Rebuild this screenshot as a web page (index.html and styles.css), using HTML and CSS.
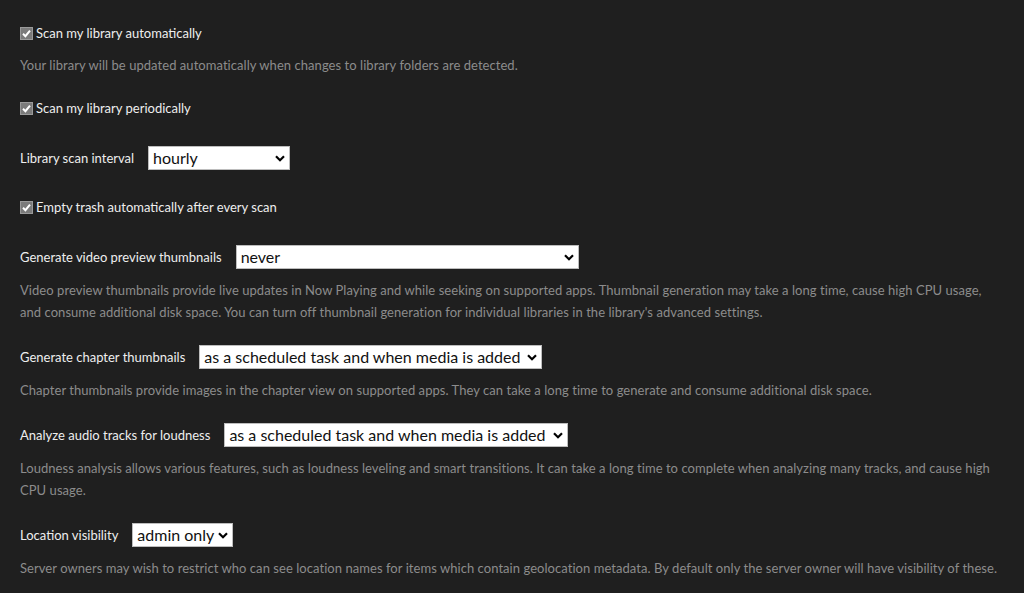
FILE: index.html
```html
<!DOCTYPE html>
<html>
<head>
<meta charset="utf-8">
<link rel="stylesheet" href="styles.css">
</head>
<body>
<form class="settings">
  <div class="group first">
    <label class="check-row"><span class="cb"><svg viewBox="0 0 13 13" width="13" height="13"><path d="M3 6.8 L5.4 9.2 L10 3.6" fill="none" stroke="#fff" stroke-width="2"/></svg></span>Scan my library automatically</label>
    <p class="help tight">Your library will be updated automatically when changes to library folders are detected.</p>
  </div>
  <div class="group nohelp">
    <label class="check-row"><span class="cb"><svg viewBox="0 0 13 13" width="13" height="13"><path d="M3 6.8 L5.4 9.2 L10 3.6" fill="none" stroke="#fff" stroke-width="2"/></svg></span>Scan my library periodically</label>
  </div>
  <div class="group nohelp">
    <div class="field-row">
      <span class="label">Library scan interval</span>
      <span class="select-wrap w-hourly"><select class="sel"><option>hourly</option></select><svg class="chev" viewBox="0 0 10 7" width="10" height="7"><path d="M1 1.2 L5 5.2 L9 1.2" fill="none" stroke="#000" stroke-width="2.2"/></svg></span>
    </div>
  </div>
  <div class="group nohelp">
    <label class="check-row"><span class="cb"><svg viewBox="0 0 13 13" width="13" height="13"><path d="M3 6.8 L5.4 9.2 L10 3.6" fill="none" stroke="#fff" stroke-width="2"/></svg></span>Empty trash automatically after every scan</label>
  </div>
  <div class="group">
    <div class="field-row">
      <span class="label">Generate video preview thumbnails</span>
      <span class="select-wrap w-video"><select class="sel"><option>never</option></select><svg class="chev" viewBox="0 0 10 7" width="10" height="7"><path d="M1 1.2 L5 5.2 L9 1.2" fill="none" stroke="#000" stroke-width="2.2"/></svg></span>
    </div>
    <p class="help">Video preview thumbnails provide live updates in Now Playing and while seeking on supported apps. Thumbnail generation may take a long time, cause high CPU usage, and consume additional disk space. You can turn off thumbnail generation for individual libraries in the library's advanced settings.</p>
  </div>
  <div class="group">
    <div class="field-row">
      <span class="label">Generate chapter thumbnails</span>
      <span class="select-wrap w-chapter"><select class="sel"><option>as a scheduled task and when media is added</option></select><svg class="chev" viewBox="0 0 10 7" width="10" height="7"><path d="M1 1.2 L5 5.2 L9 1.2" fill="none" stroke="#000" stroke-width="2.2"/></svg></span>
    </div>
    <p class="help">Chapter thumbnails provide images in the chapter view on supported apps. They can take a long time to generate and consume additional disk space.</p>
  </div>
  <div class="group">
    <div class="field-row">
      <span class="label">Analyze audio tracks for loudness</span>
      <span class="select-wrap w-analyze"><select class="sel"><option>as a scheduled task and when media is added</option></select><svg class="chev" viewBox="0 0 10 7" width="10" height="7"><path d="M1 1.2 L5 5.2 L9 1.2" fill="none" stroke="#000" stroke-width="2.2"/></svg></span>
    </div>
    <p class="help">Loudness analysis allows various features, such as loudness leveling and smart transitions. It can take a long time to complete when analyzing many tracks, and cause high CPU usage.</p>
  </div>
  <div class="group">
    <div class="field-row">
      <span class="label">Location visibility</span>
      <span class="select-wrap w-loc"><select class="sel"><option>admin only</option></select><svg class="chev" viewBox="0 0 10 7" width="10" height="7"><path d="M1 1.2 L5 5.2 L9 1.2" fill="none" stroke="#000" stroke-width="2.2"/></svg></span>
    </div>
    <p class="help">Server owners may wish to restrict who can see location names for items which contain geolocation metadata. By default only the server owner will have visibility of these.</p>
  </div>
</form>
</body>
</html>
```

FILE: styles.css
```css
html, body {
  margin: 0;
  padding: 0;
  background: #1f1f1f;
  height: 100%;
  overflow: hidden;
}
body {
  font-family: Lato, "Open Sans", sans-serif;
  font-size: 13px;
  color: #eeeeee;
}
.settings {
  padding: 21px 26px 0 20px;
  display: flex;
  flex-direction: column;
}
.group {
  margin-bottom: 21.5px;
}
.group.first {
  margin-bottom: 20px;
}
.group.nohelp {
  margin-bottom: 25.5px;
}
.check-row {
  display: flex;
  align-items: center;
  height: 24px;
  color: #eeeeee;
}
.cb {
  width: 13px;
  height: 13px;
  box-sizing: border-box;
  background: #7b7b7b;
  border: 1px solid #9a9a9a;
  margin-right: 3px;
  display: inline-flex;
  align-items: center;
  justify-content: center;
}
.cb svg { display: block; margin: -1px; }
.field-row {
  display: flex;
  align-items: center;
  height: 24px;
  gap: 14px;
}
.label {
  color: #eeeeee;
}
.select-wrap {
  position: relative;
  display: inline-block;
  height: 24px;
}
.sel {
  -webkit-appearance: none;
  appearance: none;
  box-sizing: border-box;
  height: 24px;
  width: 100%;
  margin: 0;
  padding: 0 16px 0 4px;
  border: 1px solid #bdbdbd;
  border-radius: 0;
  background: #ffffff;
  color: #111111;
  font-family: Lato, "Open Sans", sans-serif;
  font-size: 16px;
  outline: none;
}
.chev {
  position: absolute;
  right: 5px;
  top: 9px;
  pointer-events: none;
}
.w-hourly { width: 142px; }
.w-video { width: 343px; }
.w-chapter { width: 343px; }
.w-analyze { width: 344px; }
.w-loc { width: 101px; }
.help {
  margin: 10.5px 0 0 0;
  color: #8c8c8c;
  line-height: 22px;
  font-size: 13px;
  letter-spacing: 0.05px;
}
.help.tight {
  margin-top: 9px;
}
```
